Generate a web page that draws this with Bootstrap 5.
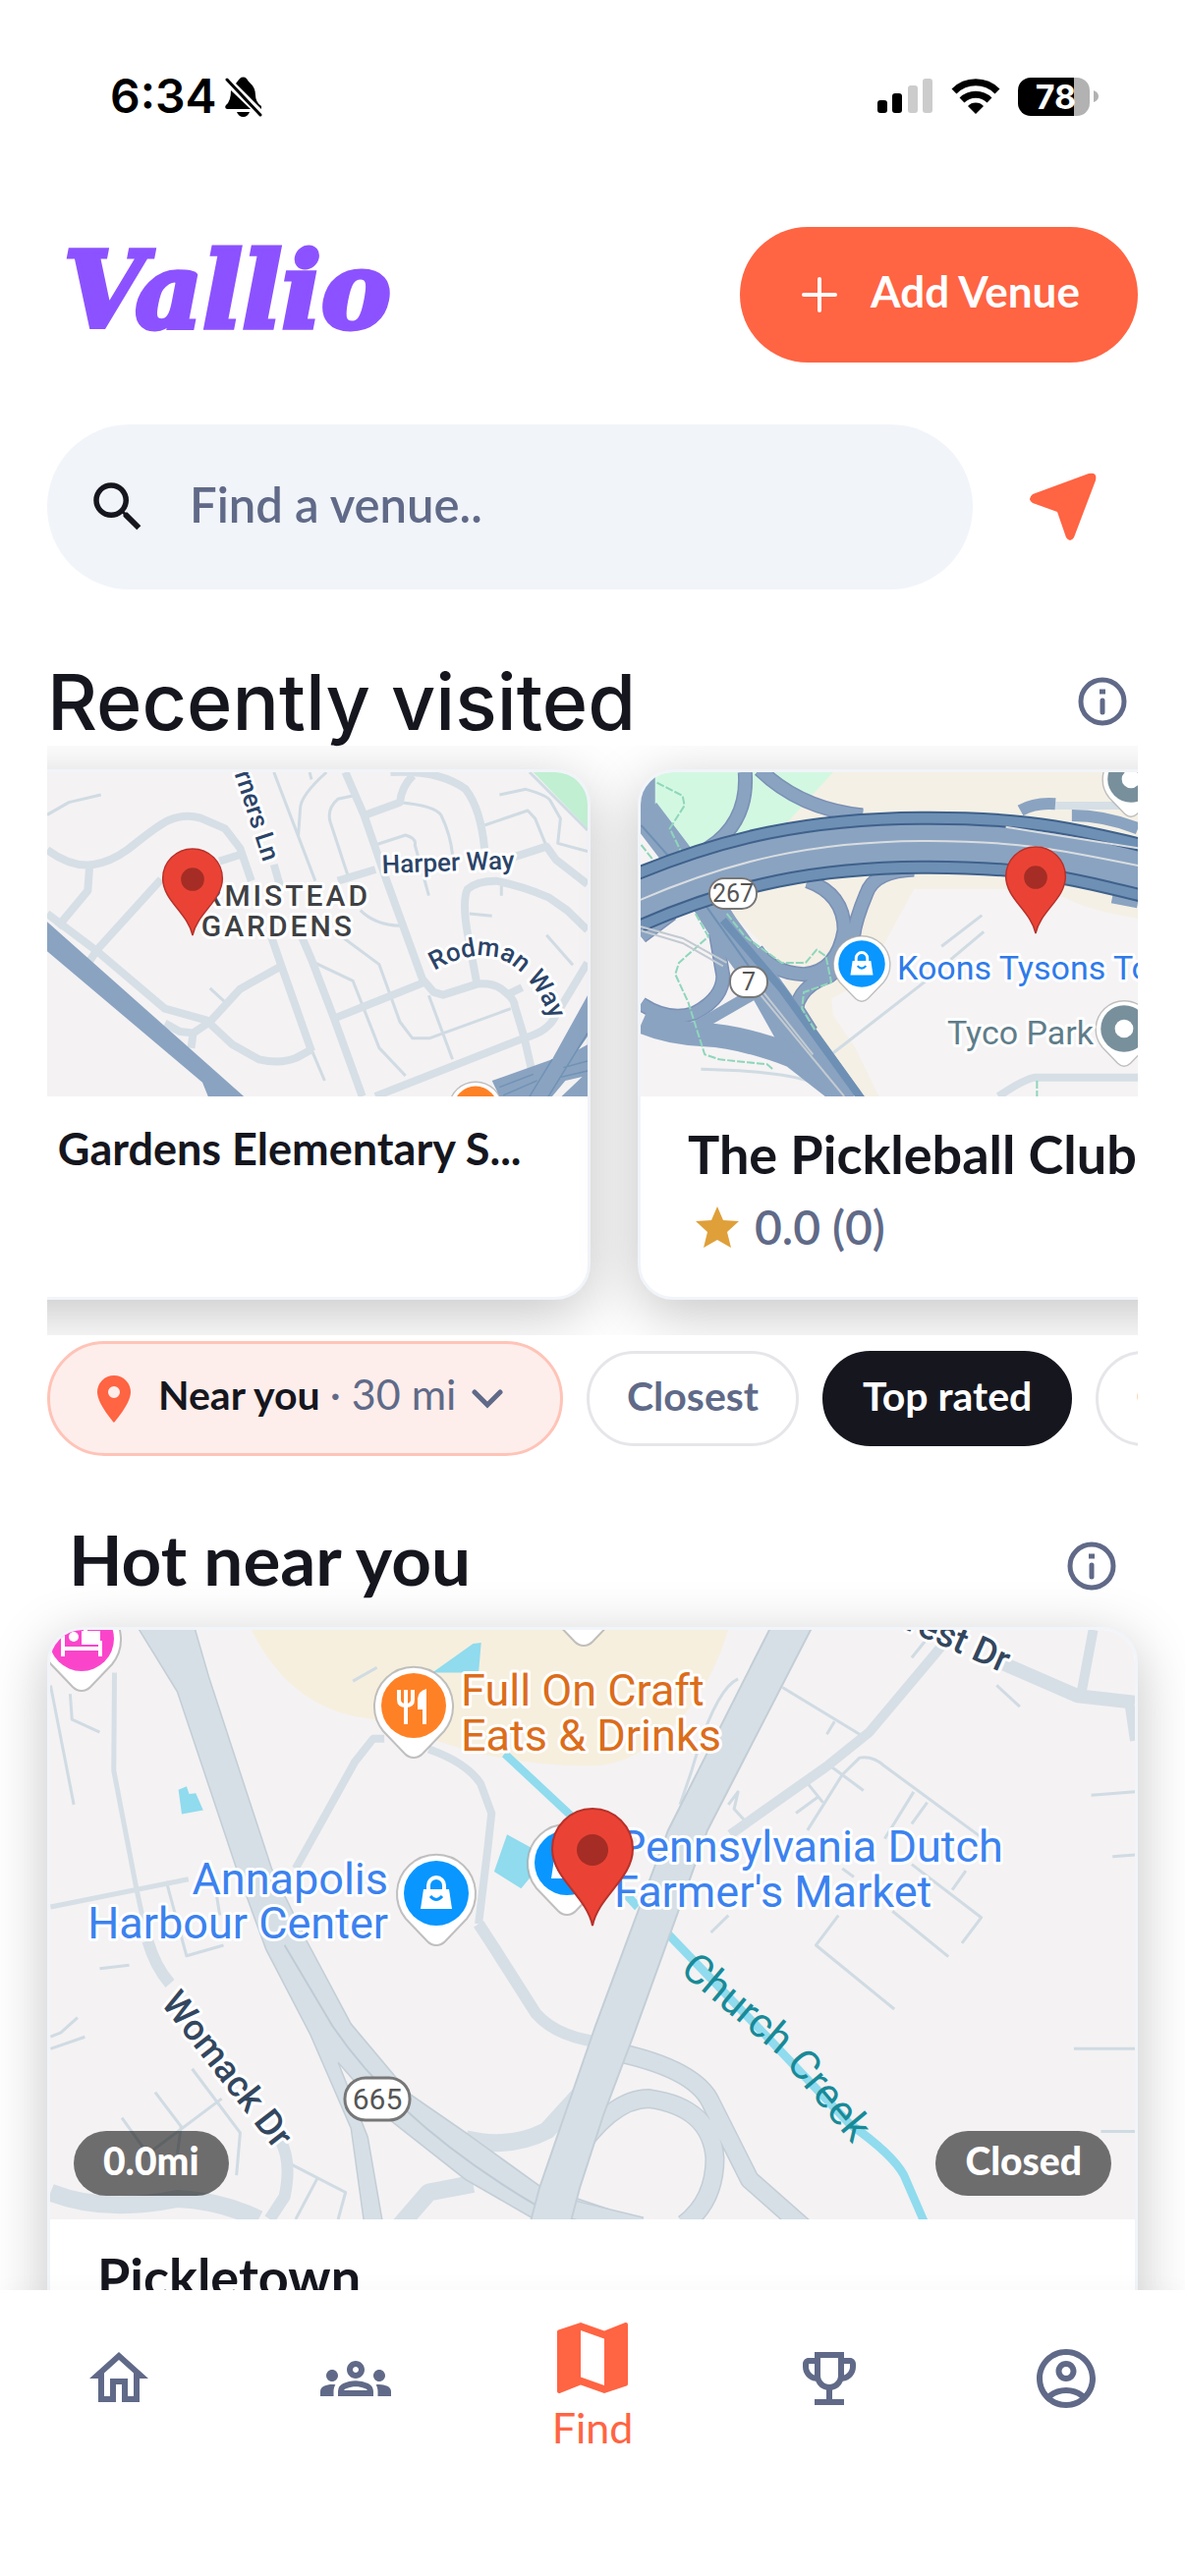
<!DOCTYPE html>
<html lang="en">
<head>
<meta charset="utf-8">
<meta name="viewport" content="width=device-width, initial-scale=1">
<title>Vallio – Find a venue</title>
<link href="https://cdn.jsdelivr.net/npm/bootstrap@5.3.0/dist/css/bootstrap.min.css" rel="stylesheet">
<style>
  :root { --ink: #15161e; --slate: #606a88; --coral: #ff6443; --mist: #f1f4f9; }
  body { font-family: Lato, "Open Sans", sans-serif; color: var(--ink); background: #fff; }
  svg { display: block; flex: none; }
  button { font-family: inherit; color: inherit; }
  .status { height: 196px; padding: 0 88px 0 112px; font: 600 48px/60px Inter, sans-serif; color: #000; }
  .status-icons { gap: 18px; }
  .battery { width: 73px; height: 39px; border-radius: 13px; background: linear-gradient(90deg, #000 78%, #b2b2b2 78%); color: #fff; font: 700 34px/39px Inter, sans-serif; }
  .page-pad { padding-left: 48px; padding-right: 48px; }
  .topbar { margin-top: 35px; height: 138px; }
  .brand { font: italic 700 106px/120px "DejaVu Serif", serif; color: #8c52ff; -webkit-text-stroke: 5px #8c52ff; padding: 0 0 8px 17px; text-decoration: none; }
  .btn-add { background: var(--coral); color: #fff; width: 405px; height: 138px; border-radius: 69px; font-size: 44px; line-height: 54px; font-weight: 700; gap: 34px; border: 0; padding-left: 10px; }
  .search-row { margin-top: 63px; }
  .search-box { background: var(--mist); height: 168px; border-radius: 84px; padding: 0 39px; gap: 38px; }
  .search-box input { border: 0; outline: 0; background: transparent; font-size: 49px; line-height: 60px; font-weight: 600; color: var(--ink); min-width: 0; }
  .search-box input::placeholder { color: var(--slate); opacity: 1; }
  .locate { width: 168px; height: 168px; border: 0; background: none; color: var(--coral); }
  .info { border: 0; background: none; padding: 0; color: var(--slate); }
  .head-recent { margin-top: 69px; padding-right: 11px; }
  .head-hot { margin: 63px 22px 21px; }
  .heading-recent { font: 500 79px/90px Inter, sans-serif; margin: 0; }
  .heading-hot { font-size: 71px; line-height: 84px; font-weight: 700; margin: 0; padding-bottom: 6px; }
  .carousel-clip { overflow: hidden; padding: 24px 0 36px; }
  .carousel-strip { gap: 48px; margin-left: -257px; }
  .venue { flex: none; border: 3px solid var(--mist); border-radius: 36px; background: #fff; box-shadow: 0 14px 60px rgba(0,0,0,.23); overflow: hidden; }
  .venue-sm { width: 810px; height: 540px; }
  .venue-sm .venue-map { height: 330px; }
  .venue-lg .venue-map { height: 600px; }
  .venue-map svg { width: 100%; height: 100%; }
  .venue-info { padding: 26px 48px; }
  .venue-name { font-size: 54px; line-height: 66px; font-weight: 700; white-space: nowrap; }
  .venue-name-long { font-size: 45px; line-height: 54px; font-weight: 700; white-space: nowrap; }
  .rating { font-size: 48px; line-height: 58px; font-weight: 600; color: var(--slate); margin-top: 12px; }
  .chips { margin-top: 6px; height: 117px; gap: 24px; }
  .chip { flex: none; height: 97px; border: 3px solid #e6e6ea; border-radius: 49px; background: #fff; color: var(--slate); font-size: 41px; line-height: 52px; font-weight: 700; padding: 0 38px 6px; }
  .chip-on { background: var(--ink); border-color: var(--ink); color: #fff; }
  .chip-near { height: 117px; width: 525px; border-color: #ffc3b7; border-radius: 59px; background: #feeeeb; color: var(--ink); padding: 0 0 0 44px; }
  .chip-near .distance { color: var(--slate); font-size: 43px; font-weight: 400; }
  .tag { background: rgba(0,0,0,.55); color: #fff; height: 66px; border-radius: 33px; padding: 0 30px; font-size: 39px; line-height: 61px; font-weight: 900; bottom: 24px; }
  .tabs { height: 291px; background: #fff; box-shadow: 0 0 24px rgba(0,0,0,.03); }
  .tab { color: var(--slate); height: 180px; text-decoration: none; }
  .tab-on { color: var(--coral); font-size: 43px; line-height: 52px; }
  .map-road path, .map-thin path { vector-effect: non-scaling-stroke; }
  .map-road { fill: none; stroke: #d6dfe6; stroke-width: 8; stroke-linejoin: round; }
  .map-thin { fill: none; stroke: #d0dbe3; stroke-width: 3; stroke-linejoin: round; }
  .map-hwy { fill: none; stroke: #8aa3c1; stroke-linejoin: round; }
  .map-hwy path { vector-effect: non-scaling-stroke; }
  .halo { paint-order: stroke; stroke: #fff; stroke-width: 6px; stroke-linejoin: round; font-family: Roboto, sans-serif; }
</style>
</head>
<body>
<svg width="0" height="0" class="position-absolute" aria-hidden="true">
  <defs>
    <g id="marker">
      <path d="M0 0C-6-30-41-48-41-78A41 41 0 0 1 41-78C41-48 6-30 0 0Z" fill="#ea4335" stroke="#b8312a" stroke-width="2"/>
      <circle cy="-77" r="16" fill="#a52d25"/>
    </g>
    <path id="poi" d="M0 53Q-5 53-9 49L-31 26A40 40 0 1 1 31 26L9 49Q5 53 0 53Z" fill="#fff" stroke="#9a9a9a" stroke-opacity=".6" stroke-width="2"/>
    <g id="poi-bag">
      <use href="#poi"/><circle r="33" fill="#0996ff"/>
      <path d="M-13-4H13L16 16H-16Z" fill="#fff"/><path d="M-8-3V-8A8 8 0 0 1 8-8V-3" fill="none" stroke="#fff" stroke-width="4"/><path d="M-6 3Q0 10 6 3" fill="none" stroke="#0996ff" stroke-width="3"/>
    </g>
    <g id="poi-food">
      <use href="#poi"/><circle r="33" fill="#ff8126"/>
      <path d="M-15-16V-6Q-15 0-8 0Q-1 0-1-6V-16M-8-16V19M11 19V-14" fill="none" stroke="#fff" stroke-width="4"/><path d="M13-17V4H4V-7Q5-15 13-17Z" fill="#fff"/>
    </g>
    <g id="poi-grey"><use href="#poi"/><circle r="33" fill="#78909c"/><circle r="13" fill="#fff"/></g>
    <g id="info-icon" fill="none" stroke="currentColor" stroke-width="5"><circle cx="25" cy="25" r="22"/><path d="M25 24V36" stroke-linecap="round"/><path d="M22 15H28"/></g>
  </defs>
</svg>

<div class="d-flex flex-column vh-100 overflow-hidden">
  <header class="status d-flex align-items-center flex-shrink-0">
    <span>6:34</span>
    <svg class="ms-2" width="38" height="42" viewBox="0 0 38 42" fill="#000"><path d="M11 8Q14 4 15 3A5 5 0 0 1 22 3Q23 5 25 7Q31 12 31 20Q31 27 37 31V34Z"/><path d="M6 15L26 34H2Q-1 33 1 30Q6 26 6 15Z"/><path d="M12 37H25Q23 42 18.500 42Q14 42 12 37Z"/><path d="M2 4L36 40" stroke="#000" stroke-width="3" stroke-linecap="round"/></svg>
    <div class="status-icons ms-auto d-flex align-items-center">
      <svg width="57" height="36" viewBox="0 0 57 36"><rect y="22" width="10" height="13" rx="3"/><rect x="15" y="15" width="10" height="20" rx="3"/><rect x="31" y="7" width="10" height="28" rx="3" fill="#ccc"/><rect x="46" width="10" height="35" rx="3" fill="#ccc"/></svg>
      <svg width="50" height="36" viewBox="0 0 50 36"><g fill="none" stroke="#000" stroke-width="7"><path d="M3 13A31 31 0 0 1 47 13"/><path d="M11 22A20 20 0 0 1 39 22"/></g><path d="M25 36L17 28A11 11 0 0 1 33 28Z"/></svg>
      <span class="battery text-center ps-1">78</span>
    </div>
    <svg class="ms-1" width="5" height="12" viewBox="0 0 5 12"><path d="M0 0Q5 2 5 6T0 12Z" fill="#b2b2b2"/></svg>
  </header>

  <main class="flex-grow-1 overflow-hidden">
    <div class="page-pad">
      <div class="topbar d-flex justify-content-between align-items-center">
        <a class="brand" href="#">Vallio</a>
        <button class="btn-add d-flex align-items-center justify-content-center" type="button">
          <svg width="36" height="36" viewBox="0 0 36 36" stroke="#fff" stroke-width="4" stroke-linecap="round"><path d="M18 2V34M2 18H34"/></svg>
          <span class="pb-2">Add Venue</span>
        </button>
      </div>

      <div class="search-row d-flex">
        <label class="search-box d-flex align-items-center flex-grow-1" for="venue-search">
          <svg width="66" height="66" viewBox="0 0 24 24" fill="#15161e"><path d="M15.500 14h-.79l-.28-.27A6.470 6.470 0 0 0 16 9.500 6.500 6.500 0 1 0 9.500 16c1.610 0 3.090-.59 4.230-1.570l.27.28v.79l5 4.990L20.490 19l-4.990-5zm-6 0C7.010 14 5 11.990 5 9.500S7.010 5 9.500 5 14 7.010 14 9.500 11.990 14 9.500 14z"/></svg>
          <input id="venue-search" class="flex-grow-1 pb-2" type="text" placeholder="Find a venue.." aria-label="Find a venue">
        </label>
        <button class="locate d-flex align-items-center justify-content-center" type="button" aria-label="Use my location">
          <svg class="ms-3" width="68" height="70" viewBox="0 0 68 70"><path d="M60 1Q69-1 67 8L45 66Q41 72 37 66L28 40L3 31Q-3 27 3 22Z" fill="currentColor"/></svg>
        </button>
      </div>

      <div class="head-recent d-flex justify-content-between align-items-center">
        <h2 class="heading-recent">Recently visited</h2>
        <button class="info" type="button" aria-label="About recently visited"><svg width="50" height="50"><use href="#info-icon"/></svg></button>
      </div>

      <div class="carousel-clip">
        <div class="carousel-strip d-flex">
          <article class="venue venue-sm">
            <div class="venue-map">
              <svg viewBox="0 0 804 330" preserveAspectRatio="xMidYMid slice">
                <rect width="804" height="330" fill="#f4f2f3"/>
                <g transform="translate(236 -36) scale(.3827 .3333)">
                  <path d="M1340 108L1484 280V100Z" fill="#c0efd2"/>
                  <g class="map-thin">
                    <path d="M1330 108L1484 285"/>
                    <path d="M47 238L105 200L190 177M985 200Q1080 210 1095 240Q1120 300 1125 360M920 330L1000 300Q1030 310 1025 330L1062 485M650 108L760 440M790 108Q720 180 720 220L715 300M745 108L750 130M860 180L820 190Q790 220 800 260L850 435M1210 270L1325 225L1345 250L1375 335M1250 177L1320 160Q1380 180 1385 195L1412 250L1405 325L1484 350"/>
                    <path d="M880 530Q920 575 985 577M830 610L930 695L985 870L1018 920H1065L1280 830M750 685L860 745L930 950L1000 1035M1062 790L1125 985M750 955L785 1050M1170 540L1230 547M1375 605L1445 697M480 768L520 810M1255 455V485"/>
                  </g>
                  <g class="map-road">
                    <path d="M47 345C100 390 140 395 170 390S230 370 260 345C300 310 340 270 370 255C400 240 430 240 455 248L520 280L560 340L590 440M160 390L155 470L75 580M350 435L180 650L160 685M505 380L560 360"/>
                    <path d="M47 540L180 655L360 830L470 865L540 940L610 985Q670 1000 710 980L750 955M430 950L435 905L480 870L560 770L670 700M360 875L400 900L440 905"/>
                    <path d="M650 390L670 470M640 600L670 700L750 960M720 600L750 680L810 860L885 1098M840 108L890 240L950 440L1045 740L1075 780L1100 788L1190 755Q1230 750 1255 770Q1290 800 1290 820L1315 915L1335 1015M1275 785L1310 765"/>
                    <path d="M920 1098L1315 920Q1380 900 1400 850L1484 690M810 860L1045 752M890 240L985 200Q990 150 1020 118M960 108Q1090 100 1160 160Q1200 220 1210 340M820 440L920 405M1280 370L1375 335L1400 375L1484 450M1190 755L1165 600Q1150 500 1165 465Q1190 440 1240 440Q1310 455 1380 490L1430 530L1484 590"/>
                  </g>
                  <path d="M-300 220L47 565L570 1098H475L460 1055L47 655L-300 320Z" fill="#8aa3c1"/>
                  <path d="M1484 790L1390 985L1230 1050L1250 1098H1484Z" fill="#8aa3c1"/>
                  <path d="M1390 1098L1425 1050L1470 1038L1415 1098ZM1460 955L1484 915V940Z" fill="#f4f2f3"/>
                  <g fill="none" stroke="#6f92b5" stroke-width="4"><path d="M1390 985L1330 1098M1484 905L1380 1098M1250 1070L1340 1030M1260 1095L1350 1050M1420 1010L1484 990M1410 1040L1484 1020"/></g>
                </g>
                <use href="#poi-food" transform="translate(690 342) scale(.68)"/>
                <g class="halo" fill="#2b4468" font-size="26" font-weight="500">
                  <text x="595" y="103" transform="rotate(-2 595 103)">Harper Way</text>
                  <path id="rodman" d="M648 202Q706 168 742 210Q756 226 764 246" fill="none" stroke="none"/>
                  <text><textPath href="#rodman">Rodman Way</textPath></text>
                  <text transform="translate(474 92) rotate(72)" text-anchor="end">Corners Ln</text>
                </g>
                <g class="halo" fill="#3f4144" font-size="30" font-weight="500" letter-spacing="3">
                  <text x="583" y="136" text-anchor="end">ARMISTEAD</text>
                  <text x="567" y="167" text-anchor="end">GARDENS</text>
                </g>
                <use href="#marker" transform="translate(402 166) scale(.74)"/>
              </svg>
            </div>
            <div class="venue-info"><div class="venue-name-long">Armistead Gardens Elementary S...</div></div>
          </article>

          <article class="venue venue-sm">
            <div class="venue-map">
              <svg viewBox="0 0 804 330" preserveAspectRatio="xMidYMid slice">
                <rect width="804" height="330" fill="#f5f3f4"/>
                <g transform="translate(-32 -36) scale(.3737 .3333)">
                  <path d="M500 108H1600V575Q1330 550 1240 490L1080 465H830L760 610L700 740L605 800L610 850L670 950L735 1098H640L520 850L440 660L300 500Z" fill="#f4f0e5"/>
                  <path d="M100 108H610L470 280L200 360L120 240Z" fill="#d3f8e2"/>
                  <g class="map-thin"><path d="M605 970L880 730M905 640L1015 545M930 680L1020 595M250 1015Q450 1020 540 1050"/></g>
                  <g class="map-road"><path d="M1060 1098Q1130 1045 1160 1040H1600M1200 210H1400"/></g>
                  <g class="map-hwy">
                    <path stroke="#7b90b5" stroke-width="15" d="M370 108Q380 260 270 340L240 380M410 100Q520 220 690 240M540 440Q640 480 640 590Q620 720 530 725Q440 720 400 650M830 405Q720 410 700 480Q670 560 665 610Q650 690 600 730Q520 760 510 830L550 900M87 815Q160 870 230 845Q310 800 310 730L290 600M87 610L170 540"/>
                    <path stroke-width="12" d="M370 108Q380 260 270 340L240 380M410 100Q520 220 690 240M540 440Q640 480 640 590Q620 720 530 725Q440 720 400 650M830 405Q720 410 700 480Q670 560 665 610Q650 690 600 730Q520 760 510 830L550 900M87 815Q160 870 230 845Q310 800 310 730L290 600M87 610L170 540"/>
                    <path stroke-width="24" d="M90 870Q160 905 260 910T500 975L640 1098"/>
                    <path stroke-width="12" d="M230 890L400 780L510 1000M1120 225Q1160 200 1215 205M1260 240Q1350 240 1440 280M1370 490L1440 505"/>
                    <path stroke-width="15" d="M105 100V240"/>
                    <path stroke-width="32" d="M95 230L190 370L310 580L420 750L650 1110"/>
                    <path stroke-width="8" stroke="#6e90b4" d="M310 560L470 770L690 1110"/>
                    <path stroke-width="2" stroke="#6e90b4" d="M87 270L190 400L380 700"/>
                  </g>
                  <g class="map-thin"><path stroke-width="2" stroke-dasharray="8 2" stroke="#8fd6bb" d="M130 140L200 180L205 210L165 280L200 360M87 330L130 390M235 540L270 610L190 690L180 725L215 810L260 970L300 985L430 1000L445 1015M320 540L370 610L470 690H535L565 650L590 670L605 750L530 780L525 830L560 895M1165 1050V1098"/></g>
                  <g class="map-hwy">
                    <path stroke-width="64" stroke="#3f618b" d="M60 507C330 375 560 325 850 323S1250 350 1600 450"/>
                    <path stroke-width="60" stroke="#6e90b4" d="M60 507C330 375 560 325 850 323S1250 350 1600 450"/>
                    <path stroke-width="40" stroke="#3f618b" d="M60 507C330 375 560 325 850 323S1250 350 1600 450"/>
                    <path stroke-width="36" d="M60 507C330 375 560 325 850 323S1250 350 1600 450"/>
                    <path stroke-width="2" stroke="#d9dde0" d="M60 510C330 375 560 320 850 318S1250 350 1600 430M1080 275L1440 340"/>
                    <path stroke-width="2" stroke="#c3cad1" d="M87 580L200 615L320 690M87 592L200 630L310 700M410 785L640 1098M420 780L555 970"/>
                  </g>
                </g>
                <g font-family="Roboto, sans-serif" font-size="25" fill="#555" text-anchor="middle">
                  <rect x="70" y="108" width="48" height="31" rx="15" fill="#fff" stroke="#777" stroke-width="2"/><text x="94" y="132">267</text>
                  <rect x="91" y="198" width="38" height="31" rx="15" fill="#fff" stroke="#777" stroke-width="2"/><text x="110" y="222">7</text>
                </g>
                <use href="#poi-bag" transform="translate(225 195) scale(.72)"/>
                <use href="#poi-grey" transform="translate(492 261) scale(.72)"/>
                <use href="#poi-grey" transform="translate(499 7) scale(.72)"/>
                <text class="halo" x="261" y="211" font-size="34" fill="#2f7bea">Koons Tysons Toyota</text>
                <text class="halo" x="312" y="277" font-size="34" fill="#5f7d8a">Tyco Park</text>
                <use href="#marker" transform="translate(402 164) scale(.74)"/>
              </svg>
            </div>
            <div class="venue-info">
              <div class="venue-name">The Pickleball Club</div>
              <div class="rating d-flex align-items-center"><svg class="ms-2 me-3" width="44" height="42" viewBox="0 0 44 42"><path d="M22 0L28 14L44 15L32 26L36 42L22 34L8 42L12 26L0 15L16 14Z" fill="#dfa03a"/></svg>0.0 (0)</div>
            </div>
          </article>
        </div>
      </div>

      <div class="chips d-flex align-items-center overflow-hidden">
        <button class="chip chip-near d-flex align-items-center" type="button">
          <svg class="me-4" width="42" height="48" viewBox="0 0 42 48"><path d="M21 0A17 17 0 0 0 4 17C4 29 21 48 21 48S38 29 38 17A17 17 0 0 0 21 0ZM21 11A6 6 0 1 1 21 23A6 6 0 0 1 21 11Z" fill="#ff6443" fill-rule="evenodd"/></svg>
          <span class="pb-2">Near you <span class="distance">· 30 mi</span></span>
          <svg class="ms-3" width="32" height="20" viewBox="0 0 32 20" fill="none" stroke="#606a88" stroke-width="5" stroke-linecap="round"><path d="M3 3L16 16L29 3"/></svg>
        </button>
        <button class="chip" type="button">Closest</button>
        <button class="chip chip-on" type="button">Top rated</button>
        <button class="chip" type="button">Open now</button>
      </div>

      <div class="head-hot d-flex justify-content-between align-items-center">
        <h2 class="heading-hot">Hot near you</h2>
        <button class="info pt-2" type="button" aria-label="About hot near you"><svg width="50" height="50"><use href="#info-icon"/></svg></button>
      </div>

      <article class="venue venue-lg">
        <div class="venue-map position-relative">
          <svg viewBox="0 0 1104 600" preserveAspectRatio="xMidYMid slice">
            <rect width="1104" height="600" fill="#f4f2f3"/>
            <path d="M205 0C240 70 290 90 345 92C420 130 500 140 560 138C620 130 670 70 690 0Z" fill="#f6efde"/>
            <g transform="translate(-21 -39) scale(.3762 .4337)">
              <g class="map-thin"><path d="M57 220L120 500M110 240L115 300L190 330M370 680L425 855L525 830M500 680L515 760M190 885L270 877M57 1045L85 1035L130 1000M57 1073L150 1045M440 1120L570 1270L560 1370M340 1175L410 1255L400 1320M250 1235L320 1320L520 1190M710 1345L855 1410L835 1473M780 1375L720 1473M875 210L940 178"/></g>
              <g class="map-road">
                <path d="M57 740L430 675M230 190L228 420L290 700L330 860" stroke-width="5"/>
                <path d="M720 650L880 400L930 345H960M1080 370Q1180 400 1220 450L1250 520L1240 600L1215 780"/>
                <path stroke-width="12" d="M1215 780L1260 840L1370 990Q1430 1050 1568 1060M320 820Q340 880 380 920M680 1290Q710 1340 690 1420L650 1473"/>
                <path stroke-width="18" d="M57 1410Q200 1460 400 1425Q520 1430 620 1473M1000 1490L1080 1410L1200 1390M1180 1285Q1300 1310 1400 1265L1500 1170"/>
              </g>
              <path d="M290 80L400 235L560 650L640 840L760 1040L870 1260L905 1480H955L915 1280L835 1105L960 1230L1180 1380L1380 1480H1568V1450L1380 1395L1180 1270L1030 1180L870 1015L750 820L655 650L485 200L445 80Z" fill="#d6dfe6" stroke="#c3ced6" stroke-width="4"/>
              <path d="M690 830L820 1020Q1000 1250 1370 1440" fill="none" stroke="#bfcbd4" stroke-width="5"/>
              <g fill="#90dbee"><path d="M1090 190L1200 122L1222 120L1215 190ZM1292 570L1355 600L1365 660L1330 697L1257 657ZM403 465L425 457L432 475L450 473L470 513L412 522Z"/></g>
              <path d="M1285 380L1470 530" fill="none" stroke="#90dbee" stroke-width="20"/>
            </g>
            <g transform="translate(539 -39) scale(.3929 .4337)">
              <g class="map-thin"><path d="M525 225L725 335M640 335L660 305M590 560L680 430L725 390Q760 385 790 410L1060 590M790 580L865 470M860 545L900 495M650 410L735 467M590 450L630 495M560 520L620 480M340 800L385 760M670 760L612 830L815 980M810 750L955 857M860 640L1040 765L990 825M1000 655L965 700M1080 220L1140 270M1325 478L1438 470M1380 622L1438 618M1280 1073H1438M1350 1267H1438M410 205Q350 230 290 420L260 500M385 500L410 470L400 510L430 540M860 155L900 110M680 650L710 670"/></g>
              <g class="map-road"><path stroke-width="10" d="M390 570L640 410L750 330L945 120M1300 235L1330 90M1425 270L1438 350"/><path stroke-width="14" d="M1100 170L1290 245L1438 260"/>
                <path stroke-width="20" stroke="#c3ced6" d="M-20 1330Q80 1190 180 1190Q340 1210 350 1330Q350 1430 270 1485M90 1080Q300 1120 340 1200L440 1380L590 1500M-20 1450L160 1490"/>
                <path stroke-width="17" d="M-20 1330Q80 1190 180 1190Q340 1210 350 1330Q350 1430 270 1485M90 1080Q300 1120 340 1200L440 1380L590 1500M-20 1450L160 1490"/></g>
              <path d="M90 680L150 740M225 800L480 1040L700 1250Q810 1320 840 1370L895 1485" fill="none" stroke="#90dbee" stroke-width="21"/>
            </g>
            <path d="M733-2L629 204L555 403L498 568L489 602H530L539 568L563 494L594 412L669 204L775-2Z" fill="#d6dfe6" stroke="#c3ced6" stroke-width="2"/>
            <g transform="translate(32 9)"><use href="#poi"/><circle r="33" fill="#fa45cb"/><path d="M-19-14V18M19 18V2M-19 10H19M-17-12H4V6" fill="none" stroke="#fff" stroke-width="4"/><circle cx="-8" cy="-2" r="5" fill="#fff"/><path d="M0-8H19V6H0Z" fill="#fff"/></g>
            <use href="#poi" transform="translate(543 -37)"/>
            <use href="#poi-food" transform="translate(370 77)"/>
            <use href="#poi-bag" transform="translate(393 268)"/>
            <use href="#poi-bag" transform="translate(526 237)"/>
            <rect x="300" y="456" width="66" height="43" rx="21" fill="#fff" stroke="#777" stroke-width="3"/>
            <text x="333" y="488" text-anchor="middle" font-family="Roboto, sans-serif" font-size="30" fill="#555">665</text>
            <g class="halo" font-size="45">
              <g fill="#dc6d1b"><text x="418" y="77">Full On Craft</text><text x="418" y="123">Eats &amp; Drinks</text></g>
              <g fill="#3c82ef"><text x="344" y="269" text-anchor="end">Annapolis</text><text x="344" y="314" text-anchor="end">Harbour Center</text><text x="578" y="236">Pennsylvania Dutch</text><text x="574" y="282">Farmer's Market</text></g>
            </g>
            <g class="halo" font-size="37" font-weight="500" fill="#33475f">
              <text transform="translate(112 380) rotate(52)">Womack Dr</text>
              <text transform="translate(970 44) rotate(24)" text-anchor="end">Forest Dr</text>
            </g>
            <path id="creek" d="M640 348L740 432L822 530" fill="none"/>
            <text font-family="Roboto, sans-serif" font-size="42" fill="#188a98"><textPath href="#creek">Church Creek</textPath></text>
            <use href="#marker" transform="translate(552 301)"/>
          </svg>
          <span class="tag position-absolute start-0 ms-4">0.0mi</span>
          <span class="tag position-absolute end-0 me-4">Closed</span>
        </div>
        <div class="venue-info"><div class="venue-name">Pickletown</div></div>
      </article>
    </div>
  </main>

  <nav class="tabs d-flex flex-shrink-0 position-relative">
    <a class="tab flex-fill w-100 d-flex align-items-center justify-content-center" href="#" aria-label="Home"><svg width="72" height="72" viewBox="0 0 24 24" fill="currentColor"><path d="M12 5.690l5 4.500V18h-2v-6H9v6H7v-7.810l5-4.500M12 3L2 12h3v8h6v-6h2v6h6v-8h3L12 3z"/></svg></a>
    <a class="tab flex-fill w-100 d-flex align-items-center justify-content-center" href="#" aria-label="Groups"><svg width="72" height="72" viewBox="0 0 24 24" fill="currentColor"><path d="M4 13c1.100 0 2-.9 2-2s-.9-2-2-2-2 .9-2 2 .9 2 2 2zm1.130 1.100c-.37-.06-.74-.1-1.130-.1-.99 0-1.930.21-2.780.58A2.010 2.010 0 0 0 0 16.430V18h4.500v-1.610c0-.83.23-1.610.63-2.290zM20 13c1.100 0 2-.9 2-2s-.9-2-2-2-2 .9-2 2 .9 2 2 2zm4 3.430c0-.81-.48-1.530-1.220-1.850A6.950 6.950 0 0 0 20 14c-.39 0-.76.04-1.130.1.4.68.63 1.460.63 2.290V18H24v-1.570zm-7.760-2.780A10.100 10.100 0 0 0 12 12.750c-1.630 0-3.070.39-4.240.9A2.990 2.990 0 0 0 6 16.390V18h12v-1.610c0-1.180-.68-2.260-1.760-2.740zM8.070 16c.09-.23.13-.39.91-.69.97-.38 1.990-.56 3.020-.56s2.050.18 3.020.56c.77.3.81.46.91.69H8.070zM12 8c.55 0 1 .45 1 1s-.45 1-1 1-1-.45-1-1 .45-1 1-1m0-2c-1.660 0-3 1.340-3 3s1.340 3 3 3 3-1.340 3-3-1.340-3-3-3z"/></svg></a>
    <a class="tab tab-on flex-fill w-100 d-flex flex-column align-items-center" href="#"><svg class="mt-4" width="96" height="90" viewBox="0 0 24 24" preserveAspectRatio="xMidYMid slice" fill="currentColor"><path d="M20.500 3l-.16.03L15 5.100 9 3 3.360 4.900c-.21.07-.36.25-.36.48V20.500c0 .28.22.5.5.5l.16-.03L9 18.900l6 2.100 5.640-1.900c.21-.07.36-.25.36-.48V3.500c0-.28-.22-.5-.5-.5zM15 19l-6-2.110V5l6 2.110V19z"/></svg>Find</a>
    <a class="tab flex-fill w-100 d-flex align-items-center justify-content-center" href="#" aria-label="Trophies"><svg width="72" height="72" viewBox="0 0 24 24" fill="currentColor"><path d="M19 5h-2V3H7v2H5c-1.100 0-2 .9-2 2v1c0 2.550 1.920 4.630 4.390 4.940A5.010 5.010 0 0 0 11 15.900V19H7v2h10v-2h-4v-3.100a5.010 5.010 0 0 0 3.610-2.960C19.080 12.630 21 10.550 21 8V7c0-1.100-.9-2-2-2zM5 8V7h2v3.820C5.840 10.400 5 9.300 5 8zm7 6c-1.650 0-3-1.350-3-3V5h6v6c0 1.650-1.350 3-3 3zm7-6c0 1.300-.84 2.400-2 2.820V7h2v1z"/></svg></a>
    <a class="tab flex-fill w-100 d-flex align-items-center justify-content-center" href="#" aria-label="Profile"><svg width="72" height="72" viewBox="0 0 24 24" fill="currentColor"><path d="M12 2C6.480 2 2 6.480 2 12s4.480 10 10 10 10-4.480 10-10S17.520 2 12 2zM7.350 18.500C8.660 17.560 10.260 17 12 17s3.340.56 4.650 1.500C15.340 19.440 13.740 20 12 20s-3.340-.56-4.650-1.500zm10.790-1.380a9.950 9.950 0 0 0-12.280 0A7.960 7.960 0 0 1 4 12c0-4.420 3.580-8 8-8s8 3.580 8 8c0 1.950-.7 3.730-1.860 5.120zM12 6c-1.930 0-3.500 1.570-3.500 3.500S10.070 13 12 13s3.500-1.570 3.500-3.500S13.930 6 12 6zm0 5c-.83 0-1.500-.67-1.500-1.500S11.170 8 12 8s1.500.67 1.500 1.500S12.830 11 12 11z"/></svg></a>
  </nav>
</div>
<script src="https://cdn.jsdelivr.net/npm/bootstrap@5.3.0/dist/js/bootstrap.bundle.min.js"></script>
</body>
</html>
